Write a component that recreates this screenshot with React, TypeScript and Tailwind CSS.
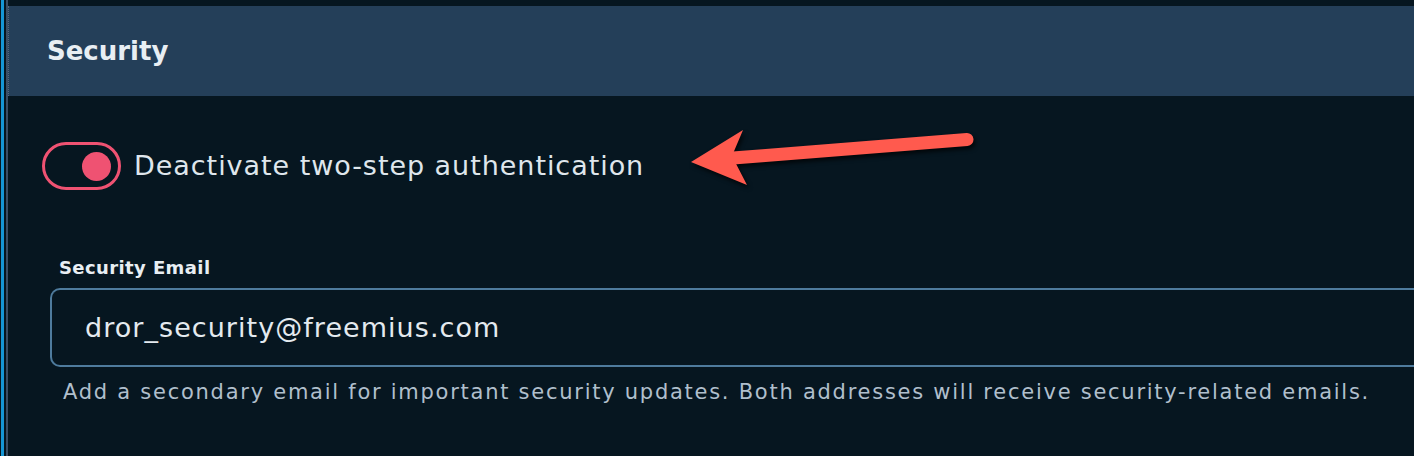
import React from "react";

export default function App() {
  return (
    <div
      className="relative w-[1414px] h-[456px] overflow-hidden bg-[#061620] flex"
      style={{ fontFamily: "'DejaVu Sans', Inter, sans-serif" }}
    >
      <div className="w-px bg-[#061620]" />
      <div className="w-[3px] bg-[#1597d6]" />
      <div className="w-[2px] bg-[#061620]" />
      <div className="w-[2px] bg-[#3a4f66]" />
      <div className="flex-1 flex flex-col pt-[6px]">
        <div className="h-[90px] bg-[#243f59] border-l border-dotted border-[#55687c] flex items-center pl-[38px]">
          <h2 className="text-[26px] leading-[30px] font-bold text-[#e8eef3]">Security</h2>
        </div>
        <div className="pl-[34px] pt-[46px] flex items-center gap-[13px]">
          <div className="w-[79px] h-[48px] rounded-full border-[3px] border-[#ef5272] flex items-center justify-end pr-[7px]">
            <div className="w-[29px] h-[29px] rounded-full bg-[#ef5272]" />
          </div>
          <span className="text-[27px] leading-[30px] tracking-[0.95px] text-[#dfe6ec]">Deactivate two-step authentication</span>
        </div>
        <div className="pl-[42px] pt-[68px] flex flex-col">
          <label className="text-[18px] font-bold text-[#e8eef3] leading-[20px] tracking-[0.4px] ml-[9px]">Security Email</label>
          <div className="mt-[10px] h-[79px] rounded-[10px] border-2 border-[#4e7b9d] border-r-0 rounded-r-none flex items-center pl-[33px]">
            <span className="text-[27px] leading-[30px] tracking-[1.05px] text-[#e4eaef]">dror_security@freemius.com</span>
          </div>
          <p className="mt-[11px] ml-[13px] text-[21px] leading-[28px] tracking-[1.74px] text-[#b0bfcc] whitespace-nowrap">
            Add a secondary email for important security updates. Both addresses will receive security-related emails.
          </p>
        </div>
      </div>
      <svg
        className="absolute left-[680px] top-[120px] drop-shadow-[2px_3px_2px_rgba(0,0,0,0.7)]"
        width="310"
        height="80"
        viewBox="0 0 310 80"
      >
        <line x1="53" y1="38" x2="287" y2="19.5" stroke="#ff5a4e" strokeWidth="13" strokeLinecap="round" />
        <polygon points="11,42 63,10 52,36 67,65" fill="#ff5a4e" />
      </svg>
    </div>
  );
}
